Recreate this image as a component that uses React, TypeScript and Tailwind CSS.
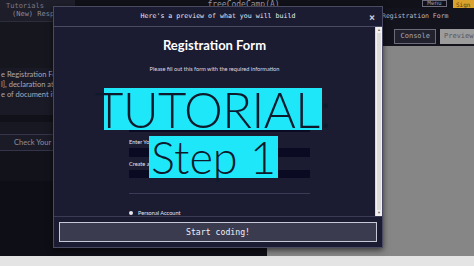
import React from 'react';

const mono = { fontFamily: '"DejaVu Sans Mono", "Liberation Mono", monospace' };
const sans = { fontFamily: 'Lato, "Noto Sans", sans-serif' };

function EditorPane() {
  return (
    <div className="w-[267px] flex flex-col bg-[#15151f]">
      <div className="h-[14px] flex items-center border-b border-[#2c2c3a] bg-[#1e1e2a]">
        <span className="pl-[12px] text-[7px] text-[#8a8a98]" style={mono}>
          (New) Responsive Web Design
        </span>
      </div>
      <div className="h-[46px] bg-[#16161f]" />
      <div
        className="flex flex-col gap-[2px] bg-[#1a1a26] py-[3px] pl-[1px] text-[7.5px] leading-[8px] text-[#a9a9b6] whitespace-nowrap"
        style={sans}
      >
        <span>e Registration Form</span>
        <span>l], declaration at the</span>
        <span>e of document it's</span>
      </div>
      <div className="h-[13px] bg-[#1a1a26]" />
      <div className="h-[7px] bg-[#111119]" />
      <div className="h-[12px] bg-[#181822]" />
      <div
        className="h-[17px] flex items-center border-y border-[#34344a] bg-[#1b1b27] pl-[14px] text-[7.5px] text-[#8f8f9c] whitespace-nowrap"
        style={sans}
      >
        Check Your Code
      </div>
      <div className="h-[30px] bg-[#12121b]" />
      <div className="flex-1 bg-[#0e0e16]" />
    </div>
  );
}

function PreviewPane() {
  return (
    <div className="flex-1 flex flex-col bg-[#13131d]">
      <div className="h-[18px] flex items-center pl-[115px]">
        <span className="text-[6.5px] text-[#b8b8c4] whitespace-nowrap" style={mono}>
          Registration Form
        </span>
      </div>
      <div className="h-[20px] flex items-center justify-end gap-[4px]">
        <div
          className="h-[15px] px-[5px] flex items-center border border-[#6a6a78] bg-[#22222e] text-[7px] text-[#a8a8b4]"
          style={mono}
        >
          Console
        </div>
        <div
          className="h-[15px] w-[34px] pl-[4px] flex items-center bg-[#9c9c9c] text-[7px] text-[#55555f] overflow-hidden whitespace-nowrap"
          style={mono}
        >
          Preview
        </div>
      </div>
      <div className="flex-1 bg-[#868686]" />
    </div>
  );
}

function TopBar() {
  return (
    <div className="h-[8px] flex items-end overflow-hidden bg-[#111119]">
      <div className="w-[75px] h-full bg-[#1f1f2b] flex items-end pl-[6px]">
        <span className="text-[7px] leading-[7px] text-[#7a7a88] -mb-[2px]" style={mono}>
          Tutorials
        </span>
      </div>
      <div className="flex-1 flex justify-center pr-[10px]">
        <span className="text-[8px] leading-[8px] text-[#9a9aa6] -mb-[1px]" style={mono}>
          freeCodeCamp(A)
        </span>
      </div>
      <div className="h-[7px] w-[25px] mb-[1px] border border-[#6c6c7c] flex items-end justify-center">
        <span className="text-[6px] leading-[6px] text-[#9a9aa6]" style={mono}>Menu</span>
      </div>
      <div className="w-[6px]" />
      <div className="h-[8px] w-[21px] bg-[#d9a22c] flex items-end pl-[3px]">
        <span className="text-[6px] leading-[6px] text-[#5a4010]" style={mono}>Sign</span>
      </div>
    </div>
  );
}

function Modal() {
  return (
    <div className="absolute left-[53px] top-[6px] w-[330px] h-[242px] flex flex-col border border-[#4a4a62] bg-[#1b1b32] shadow-[0_2px_6px_rgba(0,0,0,0.6)]">
      <div className="h-[20px] relative flex items-center justify-center border-b border-[#4a4a62]">
        <span className="text-[6.6px] text-[#e8e8ee]" style={mono}>
          Here's a preview of what you will build
        </span>
        <span className="absolute right-[7px] top-[3px] text-[10px] font-bold text-[#c8c8d0]" style={mono}>
          ×
        </span>
      </div>
      <div className="flex-1 flex overflow-hidden">
        <div className="flex-1 flex flex-col items-center overflow-hidden" style={sans}>
          <div className="mt-[10px] text-[13px] font-bold text-white leading-[16px]">Registration Form</div>
          <div className="mt-[12px] text-[5.6px] text-[#dcdce4] leading-[7px]">
            Please fill out this form with the required information
          </div>
          <div className="w-[181px] ml-[10px] flex flex-col">
            <div className="h-[6px] mt-[54px] bg-[#0a0a23]" />
            <div className="mt-[6px] text-[5.6px] leading-[7px] text-[#e6e6ec]">Enter Your First Name:</div>
            <div className="h-[9px] mt-[3px] bg-[#0a0a23]" />
            <div className="mt-[3px] text-[5.6px] leading-[7px] text-[#e6e6ec]">Create a New Password:</div>
            <div className="h-[8px] mt-[3px] bg-[#0a0a23]" />
            <div className="h-px mt-[15px] bg-[#3b3b55]" />
            <div className="mt-[15px] flex items-center gap-[5px] text-[5.6px] leading-[7px] text-[#e6e6ec]">
              <span className="w-[4px] h-[4px] rounded-full bg-[#e6e6ec]" />
              Personal Account
            </div>
          </div>
        </div>
        <div className="w-[7px] flex flex-col bg-[#f1f1f1] border-l border-[#d8d8d8]">
          <div className="h-[6px] flex items-center justify-center text-[4px] text-[#777]">▲</div>
          <div className="flex-1 mx-[1px] bg-[#dcdcdc]" />
          <div className="h-[6px] flex items-center justify-center text-[4px] text-[#777]">▼</div>
        </div>
      </div>
      <div className="h-[31px] border-t border-[#3b3b55] px-[5px] pt-[5px]">
        <div
          className="h-[20px] flex items-center justify-center bg-[#3b3b4f] border border-[#c8c8d4] text-[8.2px] text-[#f0f0f4]"
          style={mono}
        >
          Start coding!
        </div>
      </div>
    </div>
  );
}

function Banner() {
  return (
    <div className="absolute left-[104px] top-[88px] flex flex-col items-start text-[#0c1a2c] font-light" style={sans}>
      <div className="h-[42px] w-[218px] bg-[#1fe7fa] flex items-center justify-center text-[49px] leading-none tracking-[-0.5px]">
        TUTORIAL:
      </div>
      <div className="ml-[45px] mt-[6px] h-[42px] w-[129px] bg-[#1fe7fa] flex items-center justify-center text-[45px] leading-none">
        Step 1
      </div>
    </div>
  );
}

export default function App() {
  return (
    <div className="relative w-[474px] h-[266px] overflow-hidden flex flex-col bg-[#13131d]">
      <TopBar />
      <div className="flex-1 flex">
        <EditorPane />
        <PreviewPane />
      </div>
      <div className="h-[10px] bg-[#e4e4e4]" />
      <Modal />
      <Banner />
    </div>
  );
}
